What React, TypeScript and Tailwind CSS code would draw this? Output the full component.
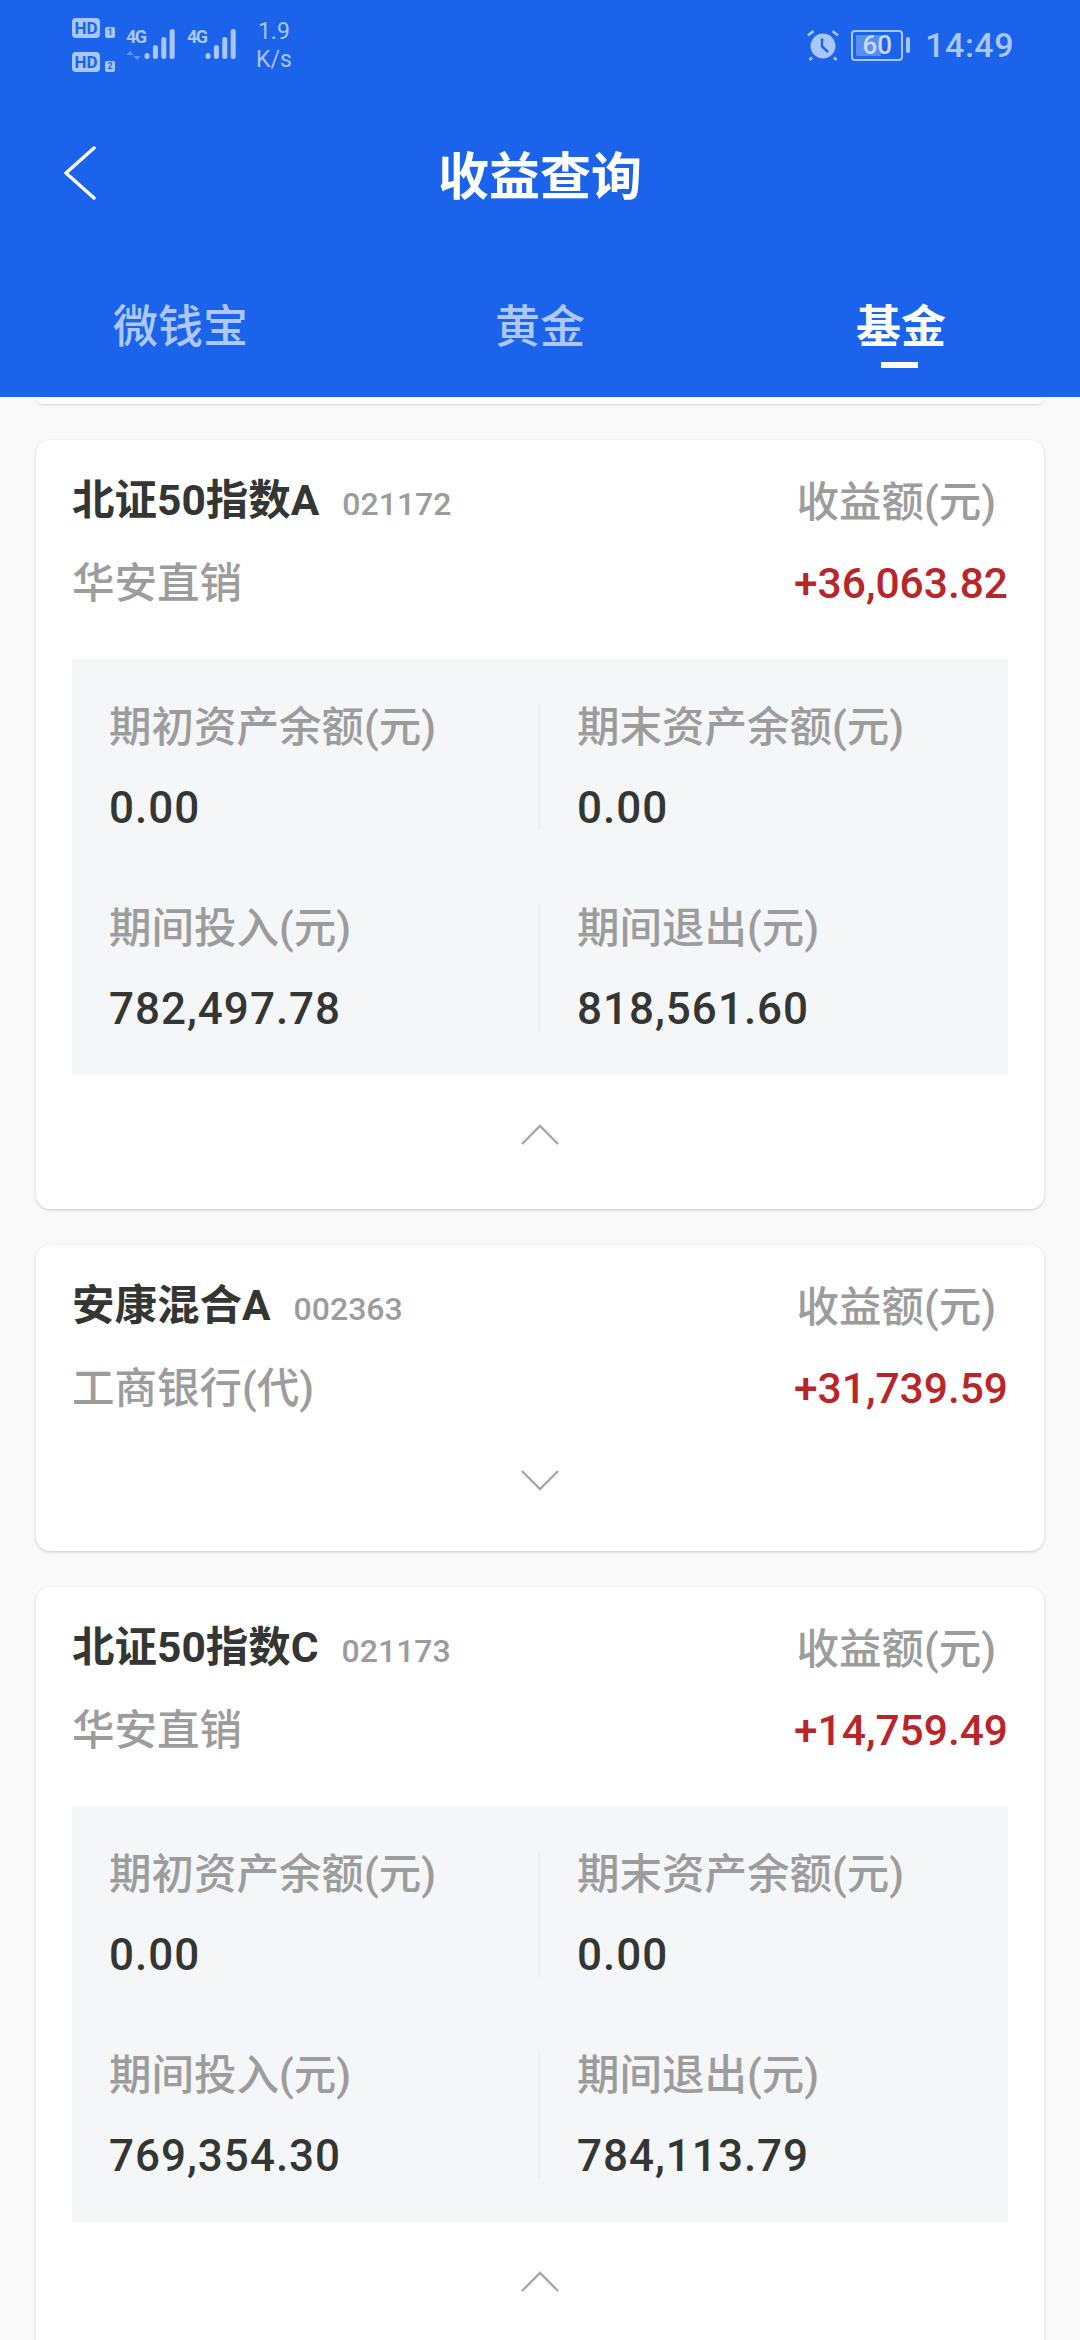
function Bars({ count }: { count: number }) {
  const heights = [6, 14, 22, 30];
  return (
    <svg width="32" height="30" viewBox="0 0 32 30" className="block">
      {heights.map((h, i) => (
        <rect key={i} x={i * 8.4 + 0.5} y={30 - h} width="5" height={h} rx="2.5" fill="#a9c6fd" opacity={i < count ? 1 : 0.4} />
      ))}
    </svg>
  );
}

function HdBadge({ n }: { n: string }) {
  return (
    <div className="flex items-end gap-[5px]">
      <span className="flex h-[20px] w-[28px] items-center justify-center rounded-[4px] bg-[#a9c6fd] text-[17px] leading-none font-bold text-[#1a63ea]">
        HD
      </span>
      <span className="flex h-[11px] w-[10px] items-center justify-center rounded-[2px] bg-[#a9c6fd] text-[9px] leading-none font-bold text-[#1a63ea]">
        {n}
      </span>
    </div>
  );
}

function StatusBar() {
  return (
    <div className="flex h-[90px] items-start justify-between pr-[66px] pl-[72px] text-[#a9c6fd]">
      <div className="flex items-start">
        <div className="flex flex-col gap-[14px] pt-[18px]">
          <HdBadge n="1" />
          <HdBadge n="2" />
        </div>
        <div className="ml-[11px] flex items-start pt-[29px]">
          <div className="flex w-[18px] flex-col">
            <span className="text-[18px] leading-[16px] font-bold tracking-[-1.6px]">4G</span>
            <svg width="16" height="11" viewBox="0 0 16 11" className="mt-[5px] block opacity-50">
              <path d="M4 11V1L0.5 5H7.5L4 1ZM11 0V10L7.5 6H14.5L11 10Z" fill="#a9c6fd" />
            </svg>
          </div>
          <Bars count={4} />
        </div>
        <div className="ml-[11px] flex items-start pt-[29px]">
          <span className="w-[18px] text-[18px] leading-[16px] font-bold tracking-[-1.6px]">4G</span>
          <Bars count={4} />
        </div>
        <div className="ml-[19px] flex flex-col items-center pt-[18px] text-[23px] leading-[28px]">
          <span>1.9</span>
          <span>K/s</span>
        </div>
      </div>
      <div className="flex items-center pt-[28px]">
        <svg width="34" height="32" viewBox="0 0 34 32" className="block">
          <circle cx="17" cy="17" r="12.5" fill="#a9c6fd" />
          <path d="M16 9.5V17.5L22 23" fill="none" stroke="#1a63ea" strokeWidth="2.4" />
          <path d="M2 6.5L7.5 2M32 6.5L26.5 2M6 28.5L3.5 31M28 28.5L30.5 31" fill="none" stroke="#a9c6fd" strokeWidth="2.6" />
        </svg>
        <div className="relative ml-[11px] flex h-[31px] w-[52px] items-center rounded-[4px] border-[2.5px] border-[#a9c6fd] p-[3px]">
          <div className="h-full w-[60%] rounded-[1px] bg-[#5a8df2]" />
          <span className="absolute inset-0 flex items-center justify-center text-[26px] leading-none font-medium text-[#c9dbff]">60</span>
        </div>
        <div className="ml-[3px] h-[16px] w-[4px] rounded-full bg-[#a9c6fd]" />
        <span className="ml-[15px] text-[34px] leading-none font-medium tracking-[0.5px]">14:49</span>
      </div>
    </div>
  );
}

function Header() {
  const tabs = ['微钱宝', '黄金', '基金'];
  return (
    <header className="h-[397px] bg-[#1a63ea]">
      <StatusBar />
      <div className="relative mt-[45px] flex h-[84px] items-center justify-center">
        <svg width="34" height="54" viewBox="0 0 34 54" className="absolute top-[11px] left-[63px]">
          <path d="M31 2L3 27L31 52" fill="none" stroke="#fff" strokeWidth="3.4" strokeLinecap="round" strokeLinejoin="round" />
        </svg>
        <h1 className="text-[51px] leading-none font-bold text-white">收益查询</h1>
      </div>
      <div className="mt-[79px] grid grid-cols-[357px_1fr_357px] text-[45px] leading-[60px] font-medium text-[#aec8ff]">
        {tabs.map((tab, i) => (
          <div key={tab} className={i === 0 ? 'pl-[113px]' : i === 1 ? 'text-center' : 'pl-[133px]'}>
            <div className={i === 2 ? 'relative inline-block font-bold text-white' : 'inline-block'}>
              {tab}
              {i === 2 && <div className="absolute top-[64px] left-[25px] h-[6px] w-[37px] bg-white" />}
            </div>
          </div>
        ))}
      </div>
    </header>
  );
}

function Cell({ label, value, divider }: { label: string; value: string; divider?: boolean }) {
  return (
    <div className={divider ? 'h-[126px] border-r-2 border-[#ecedf0] pl-[37px]' : 'h-[126px] pl-[37px]'}>
      <div className="text-[42.5px] leading-[47px] font-medium text-[#9c9c9c]">{label}</div>
      <div className="mt-[34px] text-[44px] leading-[46px] font-medium tracking-[1px] text-[#333633]">{value}</div>
    </div>
  );
}

type Fund = {
  name: string;
  code: string;
  channel: string;
  profit: string;
  detail?: string[];
};

function Chevron({ up }: { up: boolean }) {
  return (
    <svg width="38" height="21" viewBox="0 0 40 22" className="block">
      <path d={up ? 'M1 21L20 2L39 21' : 'M1 1L20 20L39 1'} fill="none" stroke="#a5a5a5" strokeWidth="2.4" />
    </svg>
  );
}

function FundCard({ fund }: { fund: Fund }) {
  return (
    <section className="rounded-[14px] bg-white px-[36px] pt-[37px] shadow-[0_1px_3px_rgba(0,0,0,0.2)]">
      <div className="flex items-center justify-between">
        <div className="flex items-baseline">
          <span className="text-[42.5px] leading-[48px] font-bold text-[#333633]">{fund.name}</span>
          <span className="ml-[23px] text-[32px] leading-[48px] font-medium text-[#9c9c9c]">{fund.code}</span>
        </div>
        <span className="mr-[12px] text-[42.5px] leading-[48px] font-medium text-[#9c9c9c]">收益额(元)</span>
      </div>
      <div className="mt-[32px] flex items-center justify-between">
        <span className="text-[42.5px] leading-[48px] font-medium text-[#9c9c9c]">{fund.channel}</span>
        <span className="text-[42.5px] leading-[48px] font-medium text-[#b8262a]">{fund.profit}</span>
      </div>
      {fund.detail ? (
        <>
          <div className="mt-[51px] grid grid-cols-2 gap-y-[75px] bg-[#f5f6f8] pt-[45px] pb-[44px]">
            <Cell label="期初资产余额(元)" value={fund.detail[0]} divider />
            <Cell label="期末资产余额(元)" value={fund.detail[1]} />
            <Cell label="期间投入(元)" value={fund.detail[2]} divider />
            <Cell label="期间退出(元)" value={fund.detail[3]} />
          </div>
          <div className="flex justify-center pt-[49px] pb-[64px]">
            <Chevron up />
          </div>
        </>
      ) : (
        <div className="flex justify-center pt-[57px] pb-[60px]">
          <Chevron up={false} />
        </div>
      )}
    </section>
  );
}

const funds: Fund[] = [
  { name: '北证50指数A', code: '021172', channel: '华安直销', profit: '+36,063.82', detail: ['0.00', '0.00', '782,497.78', '818,561.60'] },
  { name: '安康混合A', code: '002363', channel: '工商银行(代)', profit: '+31,739.59' },
  { name: '北证50指数C', code: '021173', channel: '华安直销', profit: '+14,759.49', detail: ['0.00', '0.00', '769,354.30', '784,113.79'] },
];

export default function App() {
  return (
    <div className="h-[2340px] w-[1080px] overflow-hidden bg-[#f9f9f9] [font-family:Roboto,'Noto_Sans_CJK_SC',sans-serif]">
      <Header />
      <main className="px-[36px]">
        <div className="h-[7px] rounded-b-[14px] bg-white shadow-[0_1px_2px_rgba(0,0,0,0.15)]" />
        <div className="mt-[36px] flex flex-col gap-[36px]">
          {funds.map((fund) => (
            <FundCard key={fund.code} fund={fund} />
          ))}
        </div>
      </main>
    </div>
  );
}
